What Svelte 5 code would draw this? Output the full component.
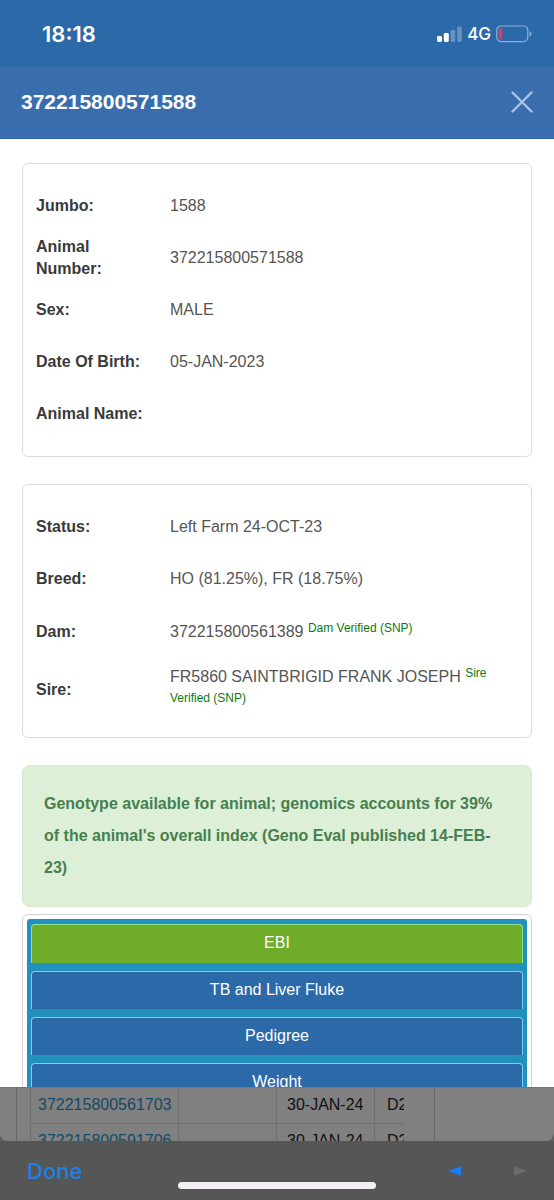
<script lang="ts">
	interface Field {
		label: string;
		value: string;
		verified?: string;
	}

	const animalNumber = '372215800571588';

	const identity: Field[] = [
		{ label: 'Jumbo:', value: '1588' },
		{ label: 'Animal Number:', value: animalNumber },
		{ label: 'Sex:', value: 'MALE' },
		{ label: 'Date Of Birth:', value: '05-JAN-2023' },
		{ label: 'Animal Name:', value: '' }
	];

	const breeding: Field[] = [
		{ label: 'Status:', value: 'Left Farm 24-OCT-23' },
		{ label: 'Breed:', value: 'HO (81.25%), FR (18.75%)' },
		{ label: 'Dam:', value: '372215800561389', verified: 'Dam Verified (SNP)' },
		{ label: 'Sire:', value: 'FR5860 SAINTBRIGID FRANK JOSEPH', verified: 'Sire Verified (SNP)' }
	];

	const tabs = ['EBI', 'TB and Liver Fluke', 'Pedigree', 'Weight'];
	let active = $state('EBI');

	const herd = [
		{ tag: '372215800561703', date: '30-JAN-24', code: 'D2' },
		{ tag: '372215800591706', date: '30-JAN-24', code: 'D2' }
	];
</script>

{#snippet card(fields: Field[])}
	<dl class="card">
		{#each fields as field}
			<div class="row" class:row--verified={field.verified}>
				<dt>{field.label}</dt>
				<dd>
					{field.value}
					{#if field.verified}<sup>{field.verified}</sup>{/if}
				</dd>
			</div>
		{/each}
	</dl>
{/snippet}

<div class="screen">
	<!-- Phone status bar -->
	<div class="status">
		<span class="time">18:18</span>
		<div class="status-icons">
			<svg width="25" height="16" viewBox="0 0 25 16" aria-hidden="true">
				<rect x="0" y="10" width="5" height="6" rx="1.4" fill="#fff" />
				<rect x="6.8" y="7" width="5" height="9" rx="1.4" fill="#fff" />
				<rect x="13.6" y="4" width="4.6" height="12" rx="1.4" fill="#fff" opacity="0.28" />
				<rect x="20.2" y="0.5" width="4.6" height="15.5" rx="1.4" fill="#fff" opacity="0.28" />
			</svg>
			<span class="network">4G</span>
			<svg width="36" height="18" viewBox="0 0 36 18" aria-hidden="true">
				<rect x="0.8" y="1" width="31" height="15.6" rx="4.4" fill="none" stroke="#8fb0dc" stroke-width="1.2" />
				<path d="M5 3.4h1v11h-1q-2-0.4-2-2.4v-6.200q0-2 2-2.400z" fill="#d8405c" stroke="#d8405c" stroke-width="0.6" />
				<path d="M33.600 6.200q2 0.900 2 2.700t-2 2.700z" fill="#8fb0dc" />
			</svg>
		</div>
	</div>

	<header class="title-bar">
		<h1>{animalNumber}</h1>
		<button class="close" aria-label="Close">
			<svg width="22" height="22" viewBox="0 0 22 22" aria-hidden="true">
				<path d="M1.500 1.500l19 19M20.500 1.500l-19 19" stroke="#a9c3e8" stroke-width="2.400" stroke-linecap="round" />
			</svg>
		</button>
	</header>

	<main>
		{@render card(identity)}
		{@render card(breeding)}

		<p class="notice">
			Genotype available for animal; genomics accounts for 39% of the animal's overall index (Geno Eval published 14-FEB-23)
		</p>

		<div class="tabs-frame">
			<nav class="tabs">
				{#each tabs as tab}
					<button class="tab" class:tab--active={tab === active} onclick={() => (active = tab)}>{tab}</button>
				{/each}
			</nav>
		</div>
	</main>

	<!-- Dimmed page under the dialog -->
	<section class="under">
		<div class="under-page">
			<div class="under-panel">
				<div class="under-scroll">
					<table>
						<tbody>
							{#each herd as cow}
								<tr>
									<td class="col-tag"><a href="#{cow.tag}">{cow.tag}</a></td>
									<td class="col"></td>
									<td class="col">{cow.date}</td>
									<td class="col col--code">{cow.code}</td>
								</tr>
							{/each}
						</tbody>
					</table>
				</div>
			</div>
		</div>
	</section>

	<footer class="toolbar">
		<button class="done">Done</button>
		<div class="arrows">
			<button class="arrow" aria-label="Previous">
				<svg width="14" height="10" viewBox="0 0 14 10" aria-hidden="true"><path d="M0 5l13-4.500v9z" fill="#147efb" /></svg>
			</button>
			<button class="arrow" aria-label="Next" disabled>
				<svg width="14" height="10" viewBox="0 0 14 10" aria-hidden="true"><path d="M14 5l-13-4.500v9z" fill="#6b6b6b" /></svg>
			</button>
		</div>
		<div class="home"></div>
	</footer>
</div>

<style>
	:global(body) { margin:0; background:#fff; }

	.screen {
		display:flex; flex-direction:column; height:100vh; overflow:hidden;
		font-family:"Liberation Sans", Arial, sans-serif; font-size:16px; color:#555;
	}
	button { border:0; padding:0; background:none; font:inherit; cursor:pointer; }
	svg { display:block; }

	.status {
		flex:none; display:flex; align-items:center; justify-content:space-between;
		height:66px; box-sizing:border-box; padding:2px 22px 0 42px;
		background:#2c69a9; color:#fff; font-family:Inter, sans-serif; font-weight:600;
	}
	.time { font-size:22px; }
	.status-icons { display:flex; align-items:center; gap:5px; }
	.network { font-size:17px; font-weight:500; }

	.title-bar {
		flex:none; display:flex; align-items:center; justify-content:space-between;
		height:73px; box-sizing:border-box; padding:0 21px; background:#396dad;
		border-bottom:1px solid #3565a0;
	}
	h1 { margin:0; font-size:21px; font-weight:700; color:#fff; }

	main { flex:1; min-height:0; overflow:hidden; padding:24px 22px 0; }

	.card {
		margin:0 0 27px; padding:16px 13px;
		border:1px solid #ddd; border-radius:6px;
	}
	.row { display:flex; align-items:center; min-height:52px; line-height:22px; }
	.row--verified { box-sizing:border-box; padding:7px 0; line-height:25px; }
	dt { flex:none; width:110px; margin-right:24px; font-weight:700; color:#3a3a3a; }
	dd { flex:1; margin:0; }
	sup { position:relative; top:-5px; vertical-align:baseline; font-size:12px; line-height:0; color:#0b7a12; }

	.notice {
		margin:0 0 7px; padding:22px 21px; border:1px solid #d3e9c8; border-radius:8px;
		background:#ddefd6; color:#468050; font-weight:700; line-height:32px;
	}

	.tabs-frame { padding:4px; border:1px solid #d3d1d4; border-radius:6px; }
	.tabs { display:flex; flex-direction:column; gap:8px; padding:5px 4px; border-radius:3px; background:#2190bc; }
	.tab {
		height:38px; flex:none; box-sizing:border-box; padding-bottom:2px;
		border:1px solid #7ecbf5; border-bottom:0; border-radius:4px 4px 0 0;
		background:#2c69a9; color:#fff;
	}
	.tab--active { height:39px; border-color:#8fe08a; background:#6fac2a; }

	.under { flex:none; height:54px; overflow:hidden; background:#606060; }
	.under-page { height:54px; box-sizing:border-box; padding-left:16px; border-radius:0 0 8px 8px; background:#808080; border-top:1px solid #757575; }
	.under-panel { width:75%; padding-left:13px; border:solid #686868; border-width:0 1px; }
	.under-scroll { overflow:hidden; margin-right:30px; }
	table { width:442px; table-layout:fixed; border-collapse:collapse; color:#111; }
	td { box-sizing:border-box; height:37px; padding:0 0 1px 10px; border:solid #707070; border-width:0 1px 1px 0; white-space:nowrap; }
	tr:first-child td { height:35px; }
	.col-tag { width:148px; padding-left:7px; border-left-width:1px; }
	.col { width:98px; }
	.col--code { padding-left:12px; }
	td a { color:#144a66; text-decoration:none; }

	.toolbar {
		position:relative; flex:none; display:flex; align-items:center; justify-content:space-between;
		height:59px; padding:0 27px; background:#565656;
	}
	.done { font-family:Inter, sans-serif; font-size:22px; font-weight:500; color:#1f80e6; }
	.arrows { display:flex; gap:51px; }
	.home {
		position:absolute; bottom:11px; left:50%; width:198px; height:7px; margin-left:-99px;
		border-radius:4px; background:#f1eff1;
	}
</style>
